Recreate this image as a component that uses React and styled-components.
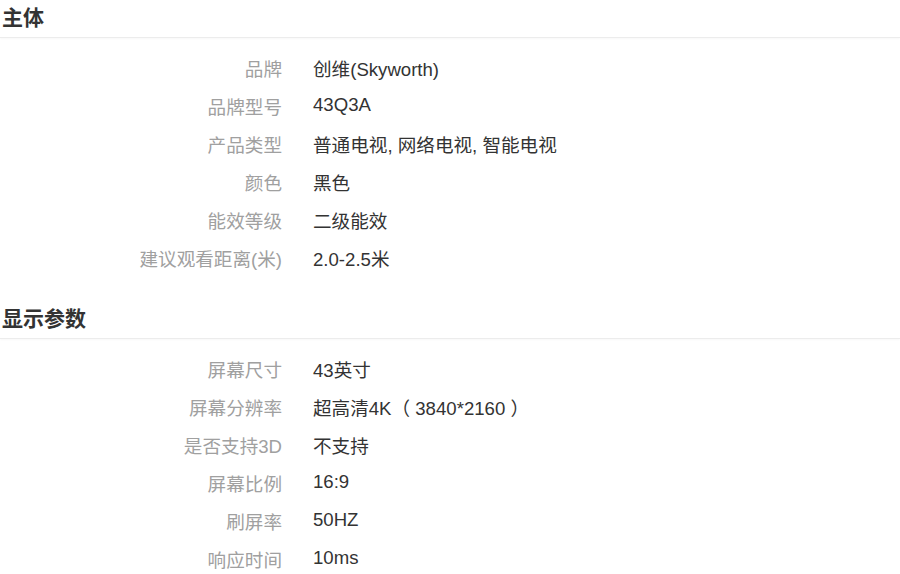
import React from "react"
import styled, { createGlobalStyle } from "styled-components"

const GlobalStyle = createGlobalStyle`
  body {
    margin: 0;
    background: #fff;
    font-family: "Liberation Sans", Arial, "Noto Sans CJK SC", sans-serif;
  }
`

const sections = [
  {
    title: "主体",
    rows: [
      ["品牌", "创维(Skyworth)"],
      ["品牌型号", "43Q3A"],
      ["产品类型", "普通电视, 网络电视, 智能电视"],
      ["颜色", "黑色"],
      ["能效等级", "二级能效"],
      ["建议观看距离(米)", "2.0-2.5米"],
    ],
  },
  {
    title: "显示参数",
    rows: [
      ["屏幕尺寸", "43英寸"],
      ["屏幕分辨率", "超高清4K（ 3840*2160 ）"],
      ["是否支持3D", "不支持"],
      ["屏幕比例", "16:9"],
      ["刷屏率", "50HZ"],
      ["响应时间", "10ms"],
    ],
  },
]

const App = () => {
  return (
    <Page>
      <GlobalStyle />
      {sections.map((s) => (
        <Section key={s.title}>
          <Heading>{s.title}</Heading>
          <List>
            {s.rows.map(([k, v]) => (
              <Row key={k}>
                <Label>{k}</Label>
                <Value>{v}</Value>
              </Row>
            ))}
          </List>
        </Section>
      ))}
    </Page>
  )
}

export default App

const Page = styled.div`
  width: 900px;
  display: flex;
  flex-direction: column;
  gap: 25px;
`

const Section = styled.section`
  display: flex;
  flex-direction: column;
`

const Heading = styled.h2`
  margin: 0;
  height: 37px;
  line-height: 36px;
  padding-left: 2px;
  font-size: 21px;
  font-weight: bold;
  color: #333;
  border-bottom: 1px solid #ececec;
  box-shadow: 0 1px 2px rgba(0, 0, 0, 0.03);
`

const List = styled.div`
  display: flex;
  flex-direction: column;
  padding-top: 10px;
`

const Row = styled.div`
  display: grid;
  grid-template-columns: 282px 1fr;
  column-gap: 31px;
  height: 38px;
  align-items: center;
  font-size: 18.6px;
`

const Label = styled.span`
  text-align: right;
  color: #a0a0a0;
  white-space: nowrap;
`

const Value = styled.span`
  color: #333;
  white-space: nowrap;
`
